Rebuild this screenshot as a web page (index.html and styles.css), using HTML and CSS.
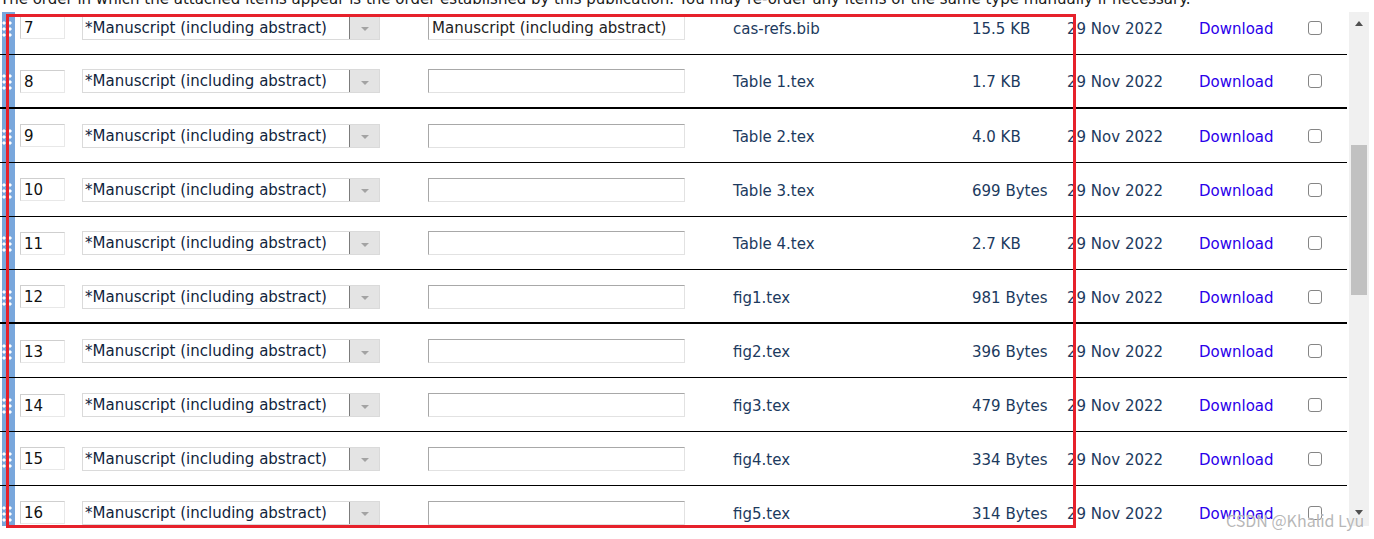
FILE: index.html
```html
<!DOCTYPE html>
<html lang="en">
<head>
<meta charset="utf-8">
<title>Attached files</title>
<link rel="stylesheet" href="styles.css">
</head>
<body>
<p class="intro">The order in which the attached items appear is the order established by this publication. You may re-order any items of the same type manually if necessary.</p>
<div class="viewport">
  <div class="table-area">
    <div class="rows">
      <div class="row">
        <div class="handle"><span class="grip"></span></div>
        <div class="c-num"><input class="num" type="text" value="7"></div>
        <div class="c-type"><div class="select"><span class="select-text">*Manuscript (including abstract)</span><span class="select-btn"><span class="tri"></span></span></div></div>
        <div class="c-desc"><input class="desc" type="text" value="Manuscript (including abstract)"></div>
        <div class="c-file">cas-refs.bib</div>
        <div class="c-size">15.5 KB</div>
        <div class="c-date">29 Nov 2022</div>
        <div class="c-dl"><a class="dl" href="#">Download</a></div>
        <div class="c-check"><input class="check" type="checkbox"></div>
      </div>
      <div class="row thick">
        <div class="handle"><span class="grip"></span></div>
        <div class="c-num"><input class="num" type="text" value="8"></div>
        <div class="c-type"><div class="select"><span class="select-text">*Manuscript (including abstract)</span><span class="select-btn"><span class="tri"></span></span></div></div>
        <div class="c-desc"><input class="desc" type="text" value=""></div>
        <div class="c-file">Table 1.tex</div>
        <div class="c-size">1.7 KB</div>
        <div class="c-date">29 Nov 2022</div>
        <div class="c-dl"><a class="dl" href="#">Download</a></div>
        <div class="c-check"><input class="check" type="checkbox"></div>
      </div>
      <div class="row">
        <div class="handle"><span class="grip"></span></div>
        <div class="c-num"><input class="num" type="text" value="9"></div>
        <div class="c-type"><div class="select"><span class="select-text">*Manuscript (including abstract)</span><span class="select-btn"><span class="tri"></span></span></div></div>
        <div class="c-desc"><input class="desc" type="text" value=""></div>
        <div class="c-file">Table 2.tex</div>
        <div class="c-size">4.0 KB</div>
        <div class="c-date">29 Nov 2022</div>
        <div class="c-dl"><a class="dl" href="#">Download</a></div>
        <div class="c-check"><input class="check" type="checkbox"></div>
      </div>
      <div class="row">
        <div class="handle"><span class="grip"></span></div>
        <div class="c-num"><input class="num" type="text" value="10"></div>
        <div class="c-type"><div class="select"><span class="select-text">*Manuscript (including abstract)</span><span class="select-btn"><span class="tri"></span></span></div></div>
        <div class="c-desc"><input class="desc" type="text" value=""></div>
        <div class="c-file">Table 3.tex</div>
        <div class="c-size">699 Bytes</div>
        <div class="c-date">29 Nov 2022</div>
        <div class="c-dl"><a class="dl" href="#">Download</a></div>
        <div class="c-check"><input class="check" type="checkbox"></div>
      </div>
      <div class="row">
        <div class="handle"><span class="grip"></span></div>
        <div class="c-num"><input class="num" type="text" value="11"></div>
        <div class="c-type"><div class="select"><span class="select-text">*Manuscript (including abstract)</span><span class="select-btn"><span class="tri"></span></span></div></div>
        <div class="c-desc"><input class="desc" type="text" value=""></div>
        <div class="c-file">Table 4.tex</div>
        <div class="c-size">2.7 KB</div>
        <div class="c-date">29 Nov 2022</div>
        <div class="c-dl"><a class="dl" href="#">Download</a></div>
        <div class="c-check"><input class="check" type="checkbox"></div>
      </div>
      <div class="row thick">
        <div class="handle"><span class="grip"></span></div>
        <div class="c-num"><input class="num" type="text" value="12"></div>
        <div class="c-type"><div class="select"><span class="select-text">*Manuscript (including abstract)</span><span class="select-btn"><span class="tri"></span></span></div></div>
        <div class="c-desc"><input class="desc" type="text" value=""></div>
        <div class="c-file">fig1.tex</div>
        <div class="c-size">981 Bytes</div>
        <div class="c-date">29 Nov 2022</div>
        <div class="c-dl"><a class="dl" href="#">Download</a></div>
        <div class="c-check"><input class="check" type="checkbox"></div>
      </div>
      <div class="row">
        <div class="handle"><span class="grip"></span></div>
        <div class="c-num"><input class="num" type="text" value="13"></div>
        <div class="c-type"><div class="select"><span class="select-text">*Manuscript (including abstract)</span><span class="select-btn"><span class="tri"></span></span></div></div>
        <div class="c-desc"><input class="desc" type="text" value=""></div>
        <div class="c-file">fig2.tex</div>
        <div class="c-size">396 Bytes</div>
        <div class="c-date">29 Nov 2022</div>
        <div class="c-dl"><a class="dl" href="#">Download</a></div>
        <div class="c-check"><input class="check" type="checkbox"></div>
      </div>
      <div class="row">
        <div class="handle"><span class="grip"></span></div>
        <div class="c-num"><input class="num" type="text" value="14"></div>
        <div class="c-type"><div class="select"><span class="select-text">*Manuscript (including abstract)</span><span class="select-btn"><span class="tri"></span></span></div></div>
        <div class="c-desc"><input class="desc" type="text" value=""></div>
        <div class="c-file">fig3.tex</div>
        <div class="c-size">479 Bytes</div>
        <div class="c-date">29 Nov 2022</div>
        <div class="c-dl"><a class="dl" href="#">Download</a></div>
        <div class="c-check"><input class="check" type="checkbox"></div>
      </div>
      <div class="row">
        <div class="handle"><span class="grip"></span></div>
        <div class="c-num"><input class="num" type="text" value="15"></div>
        <div class="c-type"><div class="select"><span class="select-text">*Manuscript (including abstract)</span><span class="select-btn"><span class="tri"></span></span></div></div>
        <div class="c-desc"><input class="desc" type="text" value=""></div>
        <div class="c-file">fig4.tex</div>
        <div class="c-size">334 Bytes</div>
        <div class="c-date">29 Nov 2022</div>
        <div class="c-dl"><a class="dl" href="#">Download</a></div>
        <div class="c-check"><input class="check" type="checkbox"></div>
      </div>
      <div class="row">
        <div class="handle"><span class="grip"></span></div>
        <div class="c-num"><input class="num" type="text" value="16"></div>
        <div class="c-type"><div class="select"><span class="select-text">*Manuscript (including abstract)</span><span class="select-btn"><span class="tri"></span></span></div></div>
        <div class="c-desc"><input class="desc" type="text" value=""></div>
        <div class="c-file">fig5.tex</div>
        <div class="c-size">314 Bytes</div>
        <div class="c-date">29 Nov 2022</div>
        <div class="c-dl"><a class="dl" href="#">Download</a></div>
        <div class="c-check"><input class="check" type="checkbox"></div>
      </div>
    </div>
  </div>
  <div class="scrollbar">
    <div class="sb-btn sb-up"><span class="sb-tri-up"></span></div>
    <div class="sb-track"><div class="sb-thumb"></div></div>
    <div class="sb-btn sb-down"><span class="sb-tri-down"></span></div>
  </div>
</div>
<div class="highlight"></div>
<div class="watermark">CSDN @Khalid Lyu</div>
</body>
</html>
```

FILE: styles.css
```css
html, body {
  margin: 0;
  padding: 0;
  background: #fff;
}
body {
  position: relative;
  width: 1374px;
  height: 539px;
  overflow: hidden;
  font-family: "DejaVu Sans", Verdana, sans-serif;
  font-size: 15px;
  color: #1b2f47;
}
.intro {
  margin: -12px 0 0 0;
  height: 24px;
  line-height: 22px;
  white-space: nowrap;
  color: #1a1a1a;
}
.viewport {
  display: flex;
  height: 514px;
}
.table-area {
  width: 1347px;
  flex: 0 0 1347px;
  overflow: hidden;
}
.rows {
  margin-top: -11px;
}
.row {
  display: grid;
  grid-template-columns: 15px 50px 315px 305px 287px 95px 132px 109px 1fr;
  align-items: center;
  height: 53.875px;
  box-sizing: border-box;
  border-bottom: 1px solid #000;
}
.row.thick {
  border-bottom-width: 2px;
}
.handle {
  align-self: stretch;
  margin-left: 2px;
  background: #79a7dc;
  display: flex;
  align-items: center;
  justify-content: flex-start;
}
.grip {
  display: block;
  width: 12px;
  height: 18px;
  margin-top: 3px;
  background-image: radial-gradient(circle, #ffffff 1.3px, rgba(255,255,255,0) 1.9px);
  background-size: 6px 6px;
  background-position: -1px 0;
}
.c-num, .c-type, .c-desc {
  display: flex;
  align-items: center;
}
.num {
  margin: 1px 0 0 5px;
  width: 45px;
  height: 23px;
  box-sizing: border-box;
  padding: 1px 0 0 3px;
  border: 1px solid;
  border-color: #cfcfcf #e8e8e8 #e8e8e8 #cfcfcf;
  font: 15px "DejaVu Sans", Verdana, sans-serif;
  color: #111;
  background: #fff;
  outline: none;
}
.select {
  margin: 1px 0 0 17px;
  width: 298px;
  height: 24px;
  box-sizing: border-box;
  border: 1px solid #dadada;
  display: flex;
  background: #fff;
}
.select-text {
  flex: 1;
  padding: 1px 0 0 2px;
  line-height: 21px;
  color: #10243c;
  white-space: nowrap;
  overflow: hidden;
}
.select-btn {
  width: 29px;
  border-left: 1px solid #7c7c7c;
  background: #e4e4e4;
  display: flex;
  align-items: center;
  justify-content: center;
}
.tri {
  display: block;
  width: 0;
  height: 0;
  margin-top: 3px;
  border-top: 4px solid #a3a3a3;
  border-left: 4px solid transparent;
  border-right: 4px solid transparent;
}
.desc {
  margin: 1px 0 0 48px;
  width: 257px;
  height: 24px;
  box-sizing: border-box;
  padding: 1px 0 0 3px;
  border: 1px solid;
  border-color: #a8a8a8 #e2e2e2 #e2e2e2 #a8a8a8;
  font: 15px "DejaVu Sans", Verdana, sans-serif;
  color: #222;
  background: #fff;
  outline: none;
}
.c-file {
  padding: 3px 0 0 48px;
  color: #1c3a5e;
  white-space: nowrap;
}
.c-size, .c-date, .c-dl {
  padding-top: 3px;
  color: #1c3a5e;
  white-space: nowrap;
}
.dl {
  color: #2a00ea;
  text-decoration: none;
}
.c-check {
  display: flex;
  align-items: center;
  padding-top: 1px;
}
.check {
  appearance: none;
  -webkit-appearance: none;
  margin: 0;
  width: 14px;
  height: 14px;
  box-sizing: border-box;
  border: 1px solid #858585;
  border-radius: 3px;
  background: #fff;
}
.scrollbar {
  margin-left: 2px;
  width: 20px;
  flex: 0 0 20px;
  background: #f0f0f0;
  display: flex;
  flex-direction: column;
}
.sb-btn {
  display: flex;
  align-items: center;
  justify-content: center;
}
.sb-up {
  height: 22px;
}
.sb-down {
  height: 18px;
  margin-bottom: 5px;
}
.sb-tri-up {
  display: block;
  width: 0;
  height: 0;
  margin-top: 1px;
  border-bottom: 5px solid #505050;
  border-left: 4.5px solid transparent;
  border-right: 4.5px solid transparent;
}
.sb-tri-down {
  display: block;
  width: 0;
  height: 0;
  border-top: 5px solid #505050;
  border-left: 4.5px solid transparent;
  border-right: 4.5px solid transparent;
}
.sb-track {
  flex: 1;
}
.sb-thumb {
  margin: 111px 2px 0 2px;
  height: 150px;
  background: #c1c1c1;
}
.highlight {
  position: absolute;
  left: 6px;
  top: 14px;
  width: 1070px;
  height: 514px;
  box-sizing: border-box;
  border: 3px solid #e6212b;
  pointer-events: none;
}
.watermark {
  position: absolute;
  left: 1226px;
  top: 509px;
  font-family: "Noto Sans CJK SC", "Liberation Sans", sans-serif;
  font-size: 16px;
  line-height: 22px;
  color: rgba(170, 170, 170, 0.85);
  text-shadow: 0 0 1px rgba(255,255,255,0.9);
  white-space: nowrap;
  pointer-events: none;
}
```
